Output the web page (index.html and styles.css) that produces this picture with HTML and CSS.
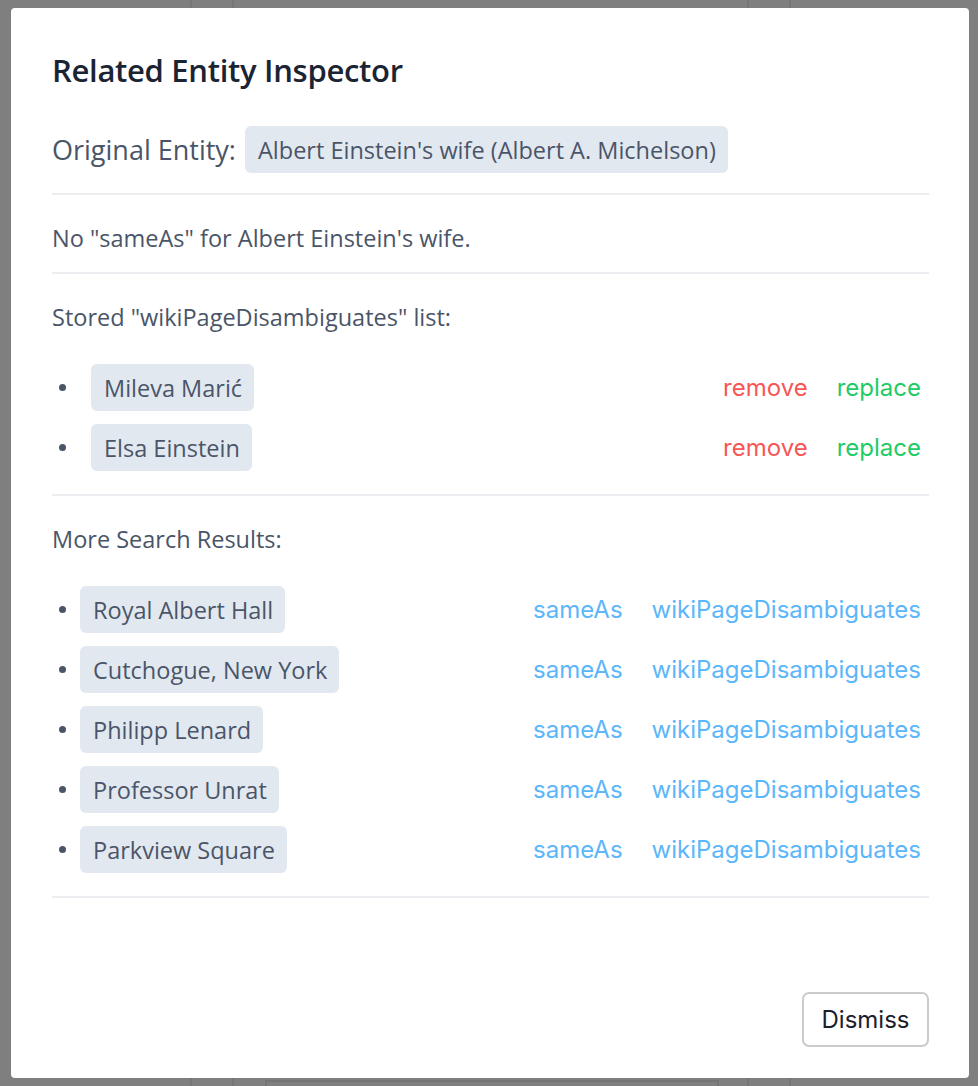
FILE: index.html
```html
<!DOCTYPE html>
<html>
<head>
<meta charset="utf-8">
<link rel="stylesheet" href="styles.css">
</head>
<body>
<div class="backdrop">
  <div class="bg-line l1"></div>
  <div class="bg-line l2"></div>
  <div class="bg-line l3"></div>
  <div class="bg-line l4"></div>
  <div class="bg-box"></div>
</div>
<div class="modal">
  <h1 class="title">Related Entity Inspector</h1>
  <div class="original">
    <span class="original-label">Original Entity:</span>
    <span class="chip">Albert Einstein's wife (Albert A. Michelson)</span>
  </div>
  <hr class="sep">
  <p class="line">No "sameAs" for Albert Einstein's wife.</p>
  <hr class="sep">
  <p class="line">Stored "wikiPageDisambiguates" list:</p>
  <ul class="list stored">
    <li class="item"><span class="chip">Mileva Marić</span><span class="actions"><a class="act red">remove</a><a class="act green">replace</a></span></li>
    <li class="item"><span class="chip">Elsa Einstein</span><span class="actions"><a class="act red">remove</a><a class="act green">replace</a></span></li>
  </ul>
  <hr class="sep">
  <p class="line">More Search Results:</p>
  <ul class="list results">
    <li class="item"><span class="chip">Royal Albert Hall</span><span class="actions"><a class="act blue">sameAs</a><a class="act blue">wikiPageDisambiguates</a></span></li>
    <li class="item"><span class="chip">Cutchogue, New York</span><span class="actions"><a class="act blue">sameAs</a><a class="act blue">wikiPageDisambiguates</a></span></li>
    <li class="item"><span class="chip">Philipp Lenard</span><span class="actions"><a class="act blue">sameAs</a><a class="act blue">wikiPageDisambiguates</a></span></li>
    <li class="item"><span class="chip">Professor Unrat</span><span class="actions"><a class="act blue">sameAs</a><a class="act blue">wikiPageDisambiguates</a></span></li>
    <li class="item"><span class="chip">Parkview Square</span><span class="actions"><a class="act blue">sameAs</a><a class="act blue">wikiPageDisambiguates</a></span></li>
  </ul>
  <hr class="sep">
  <div class="footer">
    <button class="dismiss">Dismiss</button>
  </div>
</div>
</body>
</html>
```
FILE: styles.css
```css
html, body {
  margin: 0;
  padding: 0;
}
body {
  background: #7f7f7f;
  height: 1086px;
  overflow: hidden;
  font-family: "Open Sans", "DejaVu Sans", sans-serif;
  color: #4a5568;
}
.backdrop {
  position: absolute;
  inset: 0;
}
.bg-line {
  position: absolute;
  top: 0;
  width: 2px;
  height: 1086px;
  background: #767676;
}
.l1 { left: 190px; }
.l2 { left: 232px; }
.l3 { left: 747px; }
.l4 { left: 789px; }
.bg-box {
  position: absolute;
  left: 265px;
  top: 1080px;
  width: 450px;
  height: 10px;
  border: 2px solid #747474;
}
.modal {
  position: relative;
  margin: 8px 9px 0 11px;
  height: 1070px;
  box-sizing: border-box;
  background: #fff;
  border-radius: 4px;
  padding: 44px 40px 31px 41px;
  display: flex;
  flex-direction: column;
}
.title {
  margin: 0;
  font-family: "Open Sans", sans-serif;
  font-weight: 600;
  font-size: 31px;
  line-height: 36px;
  color: #1a2433;
  letter-spacing: -0.3px;
}
.original {
  display: flex;
  align-items: center;
  margin-top: 38px;
}
.original-label {
  font-size: 27px;
  margin-right: 9px;
}
.chip {
  display: inline-flex;
  align-items: center;
  height: 47px;
  padding: 0 12px 0 13px;
  background: #e2e8f0;
  border-radius: 6px;
  font-size: 23.5px;
  color: #4a5568;
  white-space: nowrap;
}
.sep {
  border: 0;
  height: 2px;
  background: #ebedf0;
  margin: 0;
}
.original + .sep { margin-top: 20px; }
.line {
  margin: 29px 0 20px;
  line-height: 28px;
  font-size: 23.5px;
}
.list {
  list-style: none;
  margin: 0;
  padding: 0 8px 23px 0;
  display: flex;
  flex-direction: column;
  gap: 13px;
}
.line + .list { margin-top: 13px; }
.item {
  display: flex;
  align-items: center;
}
.item::before {
  content: "";
  width: 7px;
  height: 7px;
  border-radius: 50%;
  background: #4a5568;
  margin-left: 7px;
}
.stored .item::before { margin-right: 25px; }
.results .item::before { margin-right: 14px; }
.actions {
  margin-left: auto;
  display: flex;
  gap: 29px;
}
.act {
  font-family: Inter, "Liberation Sans", sans-serif;
  font-size: 24px;
  cursor: pointer;
}
.red { color: #f85656; }
.green { color: #1fcb66; }
.blue { color: #5cb6fa; }
.footer {
  margin-top: auto;
  display: flex;
  justify-content: flex-end;
}
.dismiss {
  width: 127px;
  height: 55px;
  background: #fff;
  border: 2px solid #cbcbcb;
  border-radius: 7px;
  font-family: Inter, "Liberation Sans", sans-serif;
  font-size: 24px;
  color: #1a202c;
}
```
